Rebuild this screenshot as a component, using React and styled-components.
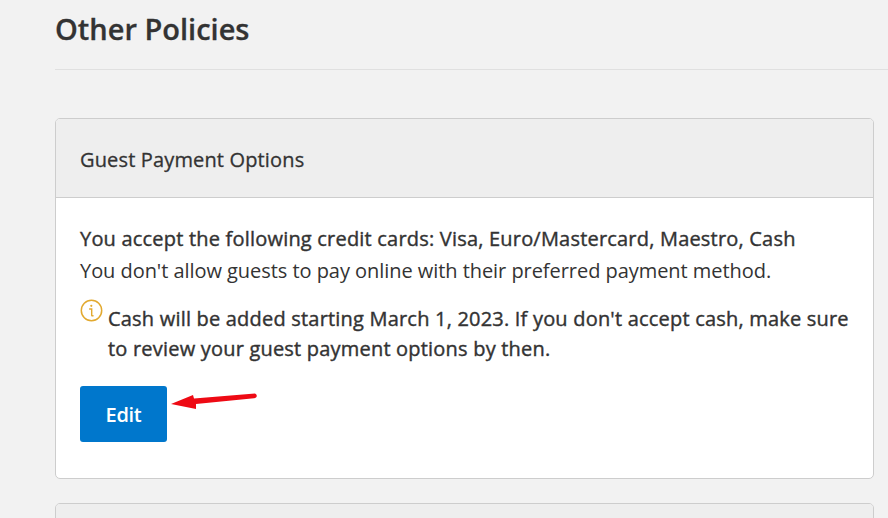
import React from "react";
import styled, { createGlobalStyle } from "styled-components";

const Global = createGlobalStyle`
  html, body { margin: 0; padding: 0; background: #f2f2f2; overflow: hidden; }
  body { font-family: "Open Sans", "Noto Sans", sans-serif; color: #333; }
`;
const Page = styled.div`
  width: 888px; height: 518px; overflow: hidden; padding-left: 55px; box-sizing: border-box;
`;
const TitleBar = styled.div`
  height: 69px; border-bottom: 1px solid #e0e0e0; margin-bottom: 48px;
`;
const Title = styled.h1`
  margin: 0; padding-top: 9px; font-size: 29px; line-height: 40px; font-weight: 600; color: #333;
  letter-spacing: 0; -webkit-text-stroke: 0.3px #333;
`;
const Card = styled.section`
  width: 819px; box-sizing: border-box; border: 1px solid #cdcdcd; border-radius: 5px;
  background: #fff; overflow: hidden; margin-bottom: 24px;
`;
const CardHeader = styled.header`
  height: 79px; box-sizing: border-box; background: #eeeeee; border-bottom: 1px solid #cdcdcd;
  padding: 27px 24px 0; font-size: 20px; line-height: 28px; font-weight: 400; letter-spacing: 0.15px;
  -webkit-text-stroke: 0.3px #333;
`;
const CardBody = styled.div`
  height: 280px; box-sizing: border-box; padding: 27px 24px 0; position: relative;
`;
const Lead = styled.p`
  margin: 0; font-size: 20px; line-height: 28px; font-weight: 400; letter-spacing: 0.2px; white-space: nowrap;
  -webkit-text-stroke: 0.4px #333;
`;
const Sub = styled.p`
  margin: 4px 0 0; font-size: 20px; line-height: 28px; font-weight: 400; letter-spacing: -0.05px; white-space: nowrap;
`;
const Notice = styled.div`
  display: flex; gap: 5px; margin-top: 14px;
`;
const NoticeIcon = styled.svg`
  width: 23px; height: 23px; flex: none;
`;
const NoticeText = styled.p`
  margin: 5px 0 0; flex: none; width: 750px; font-size: 20px; line-height: 30px; font-weight: 400; letter-spacing: 0.2px;
  -webkit-text-stroke: 0.4px #333;
`;
const EditButton = styled.button`
  display: block; width: 87px; height: 56px; margin-top: 22px; border: 0; border-radius: 3px;
  background: #0077cc; color: #fff; font: 600 20px/26px "Open Sans", sans-serif; letter-spacing: -0.3px; padding: 2px 0 0;
`;
const Arrow = styled.svg`
  position: absolute; left: 113px; top: 192px; width: 90px; height: 24px;
`;

export default function App() {
  return (
    <Page>
      <Global />
      <TitleBar><Title>Other Policies</Title></TitleBar>
      <Card>
        <CardHeader>Guest Payment Options</CardHeader>
        <CardBody>
          <Lead>You accept the following credit cards: Visa, Euro/Mastercard, Maestro, Cash</Lead>
          <Sub>You don't allow guests to pay online with their preferred payment method.</Sub>
          <Notice>
            <NoticeIcon viewBox="0 0 23 23" fill="none">
              <circle cx="11.5" cy="11.5" r="10.2" stroke="#e2a92f" strokeWidth="1.5" />
              <circle cx="11.3" cy="6.8" r="1.1" fill="#e2a92f" />
              <path d="M9.6 10h2.1v6.2c0 .6.4.8 1.3.6" stroke="#e2a92f" strokeWidth="1.4" strokeLinecap="round" />
            </NoticeIcon>
            <NoticeText>Cash will be added starting March 1, 2023. If you don't accept cash, make sure to review your guest payment options by then.</NoticeText>
          </Notice>
          <EditButton>Edit</EditButton>
          <Arrow viewBox="0 0 90 24">
            <path d="M2 14 L24 5 L25 8.5 L86 3.5 Q88.5 4.5 87.5 7 Q87 8 85 8.2 L27 14 L27 19 Z" fill="#ee0a14" />
          </Arrow>
        </CardBody>
      </Card>
      <Card>
        <CardHeader />
      </Card>
    </Page>
  );
}
